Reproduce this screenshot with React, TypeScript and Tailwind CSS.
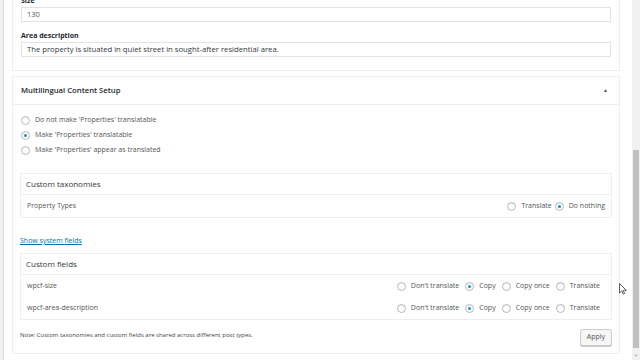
import React from "react";

function Radio({ checked }: { checked?: boolean }) {
  return (
    <span className="flex h-[9px] w-[9px] shrink-0 items-center justify-center rounded-full border border-[#b4b9be] bg-white shadow-[inset_0_1px_1px_rgba(0,0,0,0.08)]">
      {checked && <span className="h-[3px] w-[3px] rounded-full bg-[#1e8cbe]" />}
    </span>
  );
}

function Opt({ label, checked }: { label: string; checked?: boolean }) {
  return (
    <span className="flex items-center gap-[5px]">
      <Radio checked={checked} />
      <span>{label}</span>
    </span>
  );
}

function FieldRow({ name }: { name: string }) {
  return (
    <div className="flex h-[22px] items-center justify-between pl-[6px] pr-[11px]">
      <span>{name}</span>
      <div className="flex items-center gap-[6px]">
        <Opt label="Don't translate" />
        <Opt label="Copy" checked />
        <Opt label="Copy once" />
        <Opt label="Translate" />
      </div>
    </div>
  );
}

export default function App() {
  return (
    <div className="relative flex h-[360px] w-[640px] overflow-hidden bg-white font-['Open_Sans',sans-serif] text-[7px] text-[#444]">
      <div className="w-[4px] shrink-0 border-r border-[#d6d6d6] bg-[#f1f1f1]" />
      <div className="flex flex-1 flex-col pl-[8px] pr-[12px]">
        {/* previous postbox */}
        <div className="-mt-[4px] flex flex-col border-x border-b border-[#eeeeee] px-[8px] pb-[13px]">
          <label className="flex h-[11px] items-center font-bold text-[#23282d]">Size</label>
          <div className="flex h-[15px] items-center border border-[#e2e2e2] px-[5px] text-[7.5px] text-[#555]">130</div>
          <label className="mt-[8px] flex h-[12px] items-center font-bold text-[#23282d]">Area description</label>
          <div className="flex h-[15px] items-center border border-[#e2e2e2] px-[5px] text-[7.7px] text-[#32373c]">
            The property is situated in quiet street in sought-after residential area.
          </div>
        </div>
        {/* MCS postbox */}
        <div className="mt-[5px] flex flex-1 flex-col border border-[#eeeeee]">
          <div className="flex h-[28px] shrink-0 items-center justify-between border-b border-[#eeeeee] pl-[8px] pr-[11px]">
            <span className="text-[7.7px] font-semibold text-[#23282d]">Multilingual Content Setup</span>
            <span className="text-[5px] text-[#555]">▲</span>
          </div>
          <div className="flex flex-col pl-[8px] pr-[7px] pt-[8px]">
            <div className="flex flex-col text-[#555]">
              <div className="flex h-[15px] items-center"><Opt label="Do not make 'Properties' translatable" /></div>
              <div className="flex h-[15px] items-center"><Opt label="Make 'Properties' translatable" checked /></div>
              <div className="flex h-[15px] items-center"><Opt label="Make 'Properties' appear as translated" /></div>
            </div>
            <div className="-ml-[1px] mt-[15px] flex flex-col border border-[#eeeeee] text-[#555]">
              <div className="flex h-[21px] items-center border-b border-[#eeeeee] px-[5px] text-[8px] text-[#32373c]">Custom taxonomies</div>
              <div className="flex h-[22px] items-center justify-between pl-[6px] pr-[6px]">
                <span>Property Types</span>
                <div className="flex items-center gap-[3px]">
                  <Opt label="Translate" />
                  <Opt label="Do nothing" checked />
                </div>
              </div>
            </div>
            <a className="-ml-[1px] mt-[18px] flex h-[10px] items-center self-start text-[#0073aa] underline">Show system fields</a>
            <div className="-ml-[1px] mt-[7px] flex flex-col border border-[#eeeeee] text-[#555]">
              <div className="flex h-[21px] items-center border-b border-[#eeeeee] px-[5px] text-[8px] text-[#32373c]">Custom fields</div>
              <FieldRow name="wpcf-size" />
              <FieldRow name="wpcf-area-description" />
            </div>
            <div className="-ml-[1px] mt-[9px] flex items-start justify-between pb-[7px]">
              <span className="flex h-[9px] items-center pt-[4px] text-[6px] text-[#444]">Note: Custom taxonomies and custom fields are shared across different post types.</span>
              <button className="h-[17px] rounded-[2px] border border-[#ccc] bg-[#f7f7f7] px-[6px] text-[7px] text-[#555] shadow-[0_1px_0_#ccc]">Apply</button>
            </div>
          </div>
        </div>
        <div className="h-[6px]" />
      </div>
      {/* scrollbar */}
      <div className="flex w-[8px] shrink-0 flex-col bg-[#f1f1f1]">
        <div className="h-[150px]" />
        <div className="mx-[1px] h-[198px] bg-[#c1c1c1]" />
        <div className="mt-auto flex h-[8px] items-center justify-center text-[4px] text-[#a3a3a3]">▼</div>
      </div>
      {/* mouse cursor */}
      <svg className="absolute left-[619px] top-[283px]" width="8" height="12" viewBox="0 0 8 12">
        <path d="M0.5 0.5 L0.5 10 L2.8 7.8 L4.3 11.2 L5.6 10.6 L4.2 7.3 L7.3 7.3 Z" fill="white" stroke="#333" strokeWidth="0.8" />
      </svg>
    </div>
  );
}
